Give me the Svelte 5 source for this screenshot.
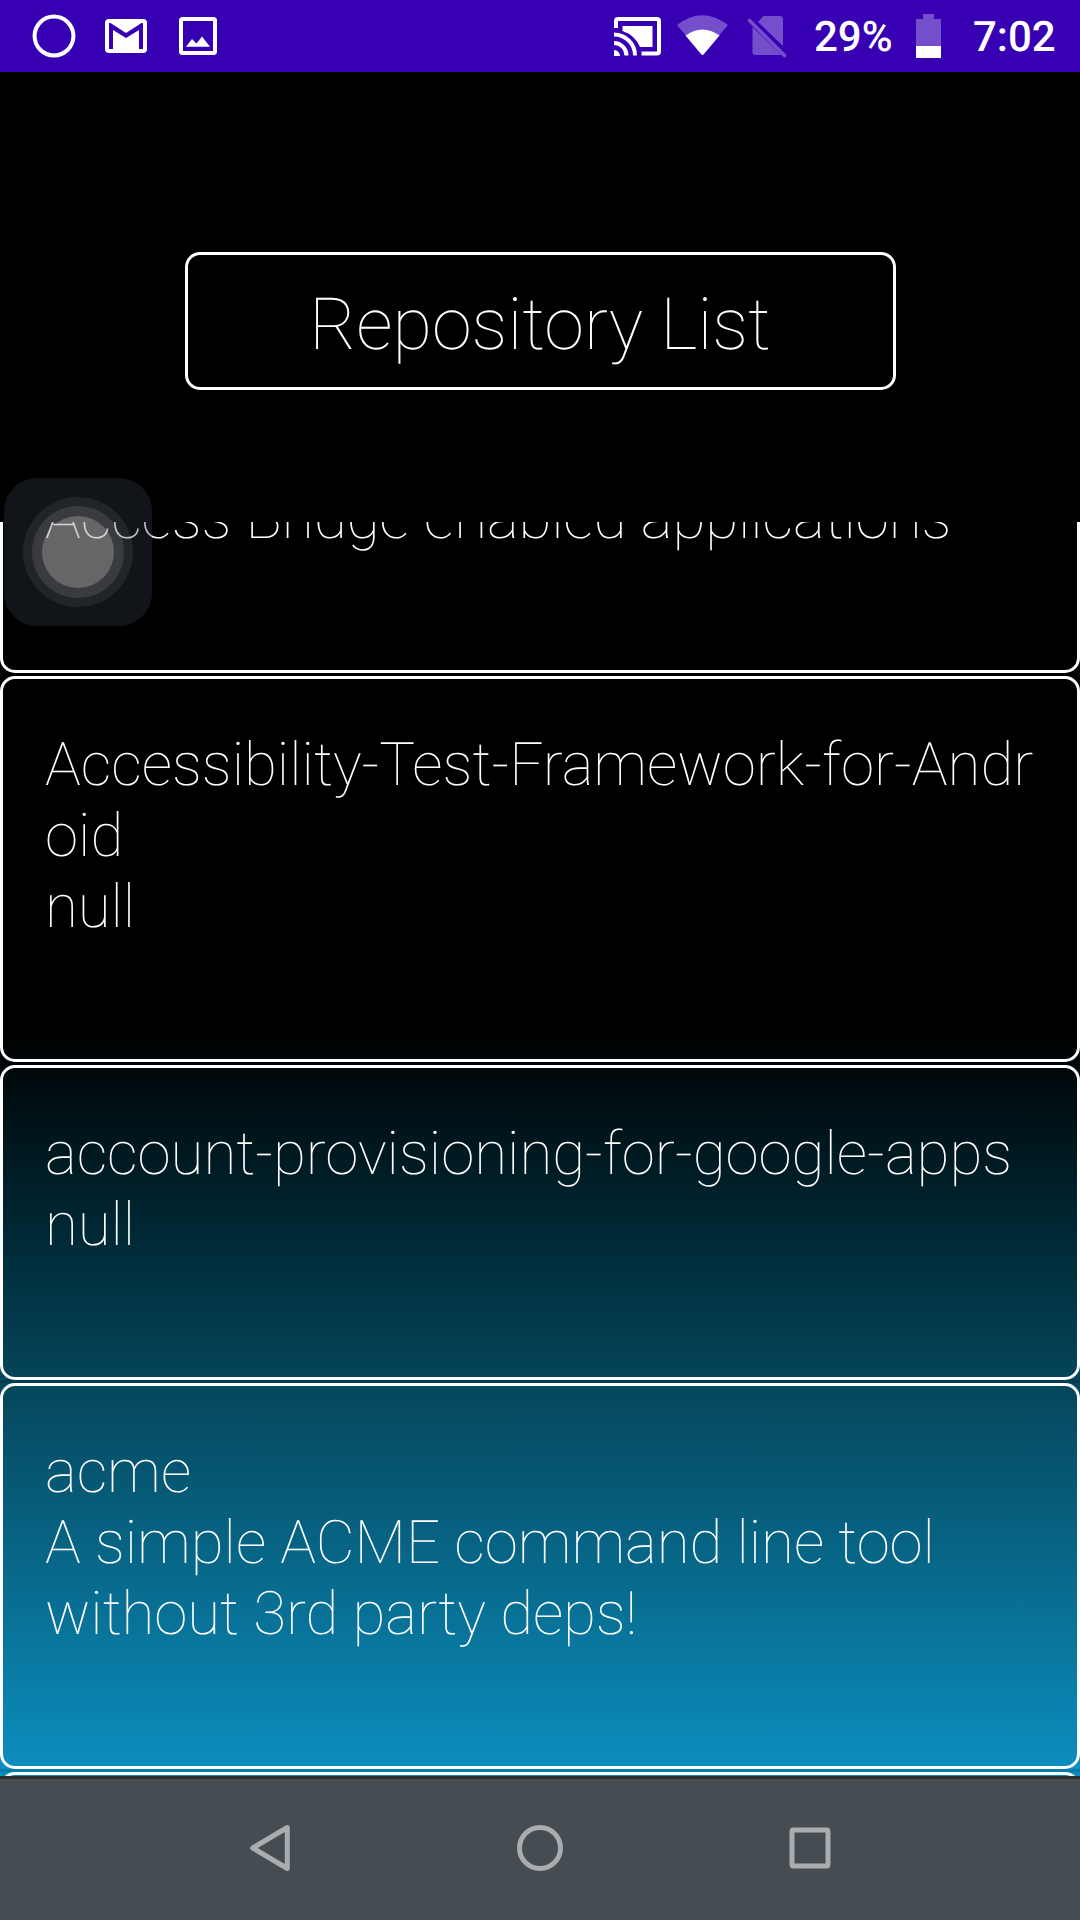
<script>
  const repos = [
    { name: 'Accessibility-Test-Framework-for-Android', description: 'null' },
    { name: 'account-provisioning-for-google-apps', description: 'null' },
    { name: 'acme', description: 'A simple ACME command line tool without 3rd party deps!' },
  ];
</script>

<div class="screen">
  <header class="status">
    <svg class="notifications" width="300" height="72" viewBox="0 0 300 72">
      <circle cx="54" cy="36" r="19.4" fill="none" stroke="#fff" stroke-width="4" />
      <rect x="105" y="19" width="42" height="34" rx="4" fill="#fff" />
      <path d="M109 49V23H110.500L126 33L141.500 23H143V49H139V30L126 38L113 30V49Z" fill="#3700b3" />
      <rect x="181" y="19" width="34" height="34" rx="1.500" fill="none" stroke="#fff" stroke-width="4" />
      <path d="M186 46.700L192 39L196.500 43.500L202 36.500L210 46.700Z" fill="#fff" />
    </svg>
    <div class="system">
      <svg width="200" height="72" viewBox="600 0 200 72">
        <g fill="none" stroke="#fff" stroke-width="4">
          <path d="M616 28V21Q616 19 618 19H657Q659 19 659 21V51.500Q659 53.500 657 53.500H641.500" />
          <path d="M614 34.500A21 21 0 0 1 635 55.500M614 43A12.500 12.500 0 0 1 626.500 55.500" />
        </g>
        <path d="M614 50A6 6 0 0 1 620 56H614ZM622.500 26H652.500V47H640A29 29 0 0 0 622.500 31Z" fill="#fff" />
        <path d="M677 25Q702 5.500 728 25L702.500 55Z" fill="#754fcb" />
        <path d="M685.500 35.500Q702.500 23.500 719.500 35.500L704 54Q702.500 56 701 54Z" fill="#fff" />
        <g fill="#754fcb">
          <path d="M758 22L763.500 16H780Q783 16 783 19V46Z" />
          <path d="M752.500 27L781 54.500Q780 55 779 55H755Q752.500 55 752.500 52Z" />
          <path d="M749.500 20.500L784.500 55.500" stroke="#754fcb" stroke-width="3.600" stroke-linecap="round" />
        </g>
      </svg>
      <span class="percent">29%</span>
      <svg class="battery" width="25" height="44" viewBox="0 0 25 44">
        <path d="M0 5H7V0H18V5H25V32H0Z" fill="#754fcb" />
        <path d="M0 32H25V44H0Z" fill="#fff" />
      </svg>
      <span class="clock">7:02</span>
    </div>
  </header>

  <section class="heading"><h1>Repository List</h1></section>

  <main class="list">
    <article class="card partial"><p class="description">Access Bridge enabled applications</p></article>
    {#each repos as repo}
      <hr />
      <article class="card">
        <p class="name">{repo.name}</p>
        <p class="description">{repo.description}</p>
      </article>
    {/each}
    <hr />
    <article class="card next"></article>
  </main>

  <nav class="nav">
    <svg width="60" height="60" viewBox="0 0 60 60"><path d="M47.300 9.500V50.500L12.700 30Z" /></svg>
    <svg width="60" height="60" viewBox="0 0 60 60"><circle cx="30" cy="30" r="20.500" /></svg>
    <svg width="60" height="60" viewBox="0 0 60 60"><rect x="12" y="12" width="36" height="36" rx="1.500" /></svg>
  </nav>

  <div class="assist"><div class="halo"><div class="ring"><div class="disc"></div></div></div></div>
</div>

<style>
  :global(body) { margin: 0; background: #000; }
  .screen {
    position: relative;
    display: flex;
    flex-direction: column;
    width: 1080px;
    height: 1920px;
    overflow: hidden;
    color: #fff;
    background: linear-gradient(#000 1030px, #002c3a 1250px, #05465b 1385px, #0b8dbd 1766px);
    font-family: Roboto, sans-serif;
    font-weight: 100;
    text-rendering: geometricPrecision;
  }
  .status {
    display: flex;
    justify-content: space-between;
    flex: 0 0 72px;
    height: 72px;
    min-height: 0;
    background: #3700b3;
  }
  .status svg { display: block; }
  .system {
    display: flex;
    align-items: center;
    width: 480px;
    font-size: 42px;
    font-weight: 500;
    line-height: 68px;
  }
  .percent { width: 102px; margin-left: 14px; padding-top: 4px; }
  .battery { margin: 0 32px 0 0; }
  .clock { padding-top: 4px; }
  .heading {
    display: flex;
    justify-content: center;
    flex: 0 0 450px;
    padding-top: 180px;
    box-sizing: border-box;
    background: #000;
  }
  h1 {
    box-sizing: border-box;
    width: 711px;
    height: 138px;
    margin: 0;
    border: 3px solid #fff;
    border-radius: 15px;
    font-size: 72px;
    font-weight: 100;
    line-height: 139px;
    text-align: center;
  }
  .list {
    display: flex;
    flex-direction: column;
    flex: 0 0 1254px;
    overflow: hidden;
  }
  hr {
    flex: 0 0 3px;
    width: 100%;
    margin: 0;
    border: 0;
    background: rgba(0, 0, 0, 0.12);
  }
  .card {
    box-sizing: border-box;
    flex-shrink: 0;
    padding: 50px 42px 117px;
    border: 3px solid #fff;
    border-radius: 15px;
    font-size: 60px;
    line-height: 71px;
  }
  .card p { margin: 0; }
  .card .name { word-break: break-all; }
  .card .description { letter-spacing: -0.07px; }
  .partial {
    margin-top: -93px;
    height: 244px;
  }
  .next { height: 300px; }
  .nav {
    display: flex;
    justify-content: center;
    align-items: center;
    gap: 210px;
    flex: 1;
    padding-bottom: 3px;
    border-top: 3px solid #2a2e31;
    background: #454d52;
  }
  .nav svg {
    fill: none;
    stroke: #aaadaf;
    stroke-width: 5;
    stroke-linejoin: round;
  }
  .assist {
    position: absolute;
    top: 478px;
    left: 4px;
    display: grid;
    place-items: center;
    width: 148px;
    height: 148px;
    border-radius: 33px;
    background: rgba(50, 62, 74, 0.34);
  }
  .halo, .ring, .disc {
    display: grid;
    place-items: center;
    border-radius: 50%;
  }
  .halo {
    width: 110px;
    height: 110px;
    background: rgba(255, 255, 255, 0.07);
  }
  .ring {
    width: 92px;
    height: 92px;
    background: rgba(255, 250, 248, 0.11);
  }
  .disc {
    width: 72px;
    height: 72px;
    background: rgba(255, 244, 240, 0.23);
  }
</style>
